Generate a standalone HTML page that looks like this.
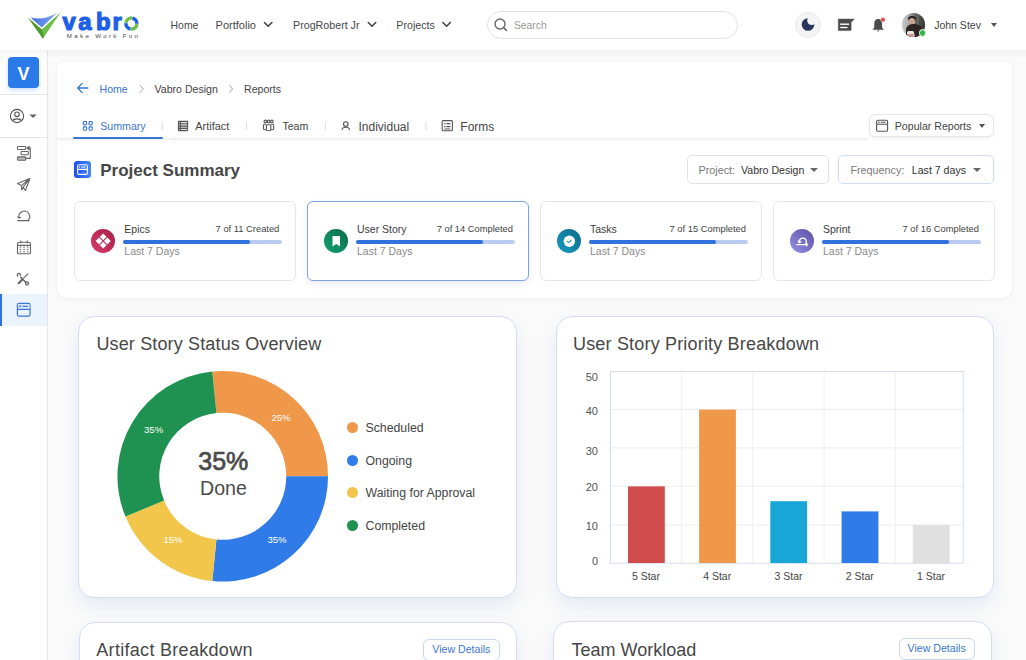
<!DOCTYPE html>
<html><head><meta charset="utf-8">
<style>
*{margin:0;padding:0;box-sizing:border-box}
html,body{width:1026px;height:660px;overflow:hidden;background:#fafafa;font-family:"Liberation Sans",sans-serif;color:#3f3f3f}
.a{position:absolute}
.t{position:absolute;white-space:nowrap;line-height:1}
#hdr{left:0;top:0;width:1026px;height:50px;background:#fff}
#side{left:0;top:50px;width:48px;height:610px;background:#fff;border-right:1px solid #e6e6e8}
#panel{left:57px;top:62.3px;width:955px;height:236.2px;background:#fff;border-radius:6px 6px 10px 10px;box-shadow:0 1px 4px rgba(0,0,0,.06)}
.card{position:absolute;top:201px;width:221.3px;height:80px;background:#fff;border:1px solid #e6e6e8;border-radius:6px}
.ccard{position:absolute;background:#fff;border:1px solid #d5ddf2;border-radius:16px;box-shadow:0 8px 18px rgba(110,130,225,.13)}
.ctitle{font-size:18px;color:#474747}
.dd{position:absolute;background:#fff;border:1px solid #e3e3e6;border-radius:5px}
.caret{position:absolute;width:0;height:0;border-left:4px solid transparent;border-right:4px solid transparent;border-top:5px solid #555}
.nav{font-size:11px;color:#474747;top:19.7px}
.ic{position:absolute;width:24px;height:24px;border-radius:50%;top:229px}
.cttl{font-size:10.5px;color:#3d3d3d;top:224.4px}
.cright{font-size:9.35px;color:#444;top:225.3px}
.csub{font-size:10.5px;color:#8a8a8a;top:246.4px}
.track{position:absolute;top:240px;height:4px;width:159px;border-radius:2px;background:#b9cbf0}
.fill{position:absolute;left:0;top:0;height:4px;width:127px;border-radius:2px;background:#2f72de}
.leg{position:absolute;left:347px;width:11px;height:11px;border-radius:50%}
.legt{font-size:12.3px;color:#444;left:365.5px}
.yl{font-size:11px;color:#555;right:428px;text-align:right}
.xl{font-size:10.5px;color:#444;top:571px}
.bar{position:absolute;width:37px}
.btn{position:absolute;background:#fff;border:1px solid #c9d6ee;border-radius:6px}
</style></head><body>
<!-- HEADER -->
<div id="hdr" class="a"></div>
<svg class="a" style="left:0;top:0" width="150" height="49" viewBox="0 0 150 49">
  <defs>
    <linearGradient id="lb" x1="0" y1="0" x2="1" y2="0"><stop offset="0" stop-color="#3b6fe0"/><stop offset="1" stop-color="#86acf2"/></linearGradient>
  </defs>
  <path d="M30.5 17.6 Q44 21 57.5 12.4 L41.8 27.6 Z" fill="url(#lb)"/>
  <path d="M28.2 18 L42.9 38.6 L60.7 12.2 L41.8 29.6 Z" fill="#6cbf45"/>
  <path d="M28.2 18 L42.9 38.6 L44 36.5 L41.8 29.6 Z" fill="#4e9a2e"/>
  <g transform="translate(131.4 23.6)" fill="none" stroke-width="3.5"><path d="M-5.43 -0.86 A5.5 5.5 0 0 1 0.38 -5.49" stroke="#6cbf45"/><path d="M0.86 -5.43 A5.5 5.5 0 0 1 5.50 0.10" stroke="#1d5fe6"/><path d="M5.47 0.57 A5.5 5.5 0 0 1 -0.38 5.49" stroke="#6cbf45"/><path d="M-0.86 5.43 A5.5 5.5 0 0 1 -5.49 -0.38" stroke="#1d5fe6"/></g>
</svg>
<div class="t" style="left:0;top:10.4px;font-size:23.8px;font-weight:700;color:#1d5fe6;-webkit-text-stroke:1.2px #1d5fe6"><span class="a" style="left:62.5px">v</span><span class="a" style="left:78.2px">a</span><span class="a" style="left:95.9px">b</span><span class="a" style="left:112.6px">r</span></div>
<div class="t" style="left:66.8px;top:33px;font-size:6.2px;color:#4a4a4a;letter-spacing:2.3px">Make Work Fun</div>

<div class="t nav" style="left:170.6px;top:20.9px;font-size:10.4px">Home</div>
<div class="t nav" style="left:215.6px">Portfolio</div>
<div class="t nav" style="left:293px;top:19.9px;font-size:10.7px">ProgRobert Jr</div>
<div class="t nav" style="left:396.3px;top:19.9px;font-size:10.7px">Projects</div>
<svg class="a" style="left:0;top:0" width="460" height="49">
  <g fill="none" stroke="#444" stroke-width="1.6" stroke-linecap="round" stroke-linejoin="round">
    <path d="M264.5 22.5 L268.2 26.2 L271.9 22.5"/>
    <path d="M368.3 22.5 L372 26.2 L375.7 22.5"/>
    <path d="M442.9 22.5 L446.6 26.2 L450.3 22.5"/>
  </g>
</svg>
<div class="a" style="left:487px;top:11px;width:251px;height:28px;border:1px solid #e3e3e3;border-radius:14px;background:#fff"></div>
<svg class="a" style="left:492px;top:16px" width="18" height="18">
  <circle cx="8" cy="8" r="5" fill="none" stroke="#666" stroke-width="1.4"/>
  <path d="M11.6 11.6 L14.5 14.5" stroke="#666" stroke-width="1.5" stroke-linecap="round"/>
</svg>
<div class="t" style="left:514px;top:21px;font-size:10.3px;color:#999">Search</div>

<div class="a" style="left:795.3px;top:12.3px;width:25.4px;height:25.4px;border-radius:50%;background:#f4f4f6;border:1px solid #e9e9ec"></div>
<svg class="a" style="left:795px;top:12px" width="26" height="26" viewBox="0 0 26 26">
  <defs><mask id="mm"><rect width="26" height="26" fill="#fff"/><circle cx="16.7" cy="8.5" r="4.5" fill="#000"/></mask></defs><circle cx="13" cy="12.5" r="6.3" fill="#28345e" mask="url(#mm)"/>
</svg>
<svg class="a" style="left:836px;top:17px" width="21" height="16" viewBox="0 0 21 16">
  <path d="M2.6 2.1 H18.3 L15.1 5.3 V13.1 Q15.1 13.6 14.6 13.6 H2.8 Q2.3 13.6 2.3 13.1 V2.6 Q2.3 2.1 2.8 2.1 Z" fill="#4a4a4a" stroke="#4a4a4a" stroke-width="0.5" stroke-linejoin="round"/>
  <rect x="4.2" y="6.5" width="9" height="1.4" fill="#fff"/>
  <rect x="4.2" y="9.8" width="7.3" height="1.4" fill="#fff"/>
</svg>
<svg class="a" style="left:870px;top:16px" width="18" height="18" viewBox="0 0 18 18">
  <path d="M8.1 3 C5 3 4.3 5.8 4.3 8 V11.5 L2.5 13.8 H13.9 L12.1 11.5 V8 C12.1 5.8 11.3 3 8.1 3 Z" fill="#4a4a4a"/>
  <path d="M6.8 14.5 A1.5 1.5 0 0 0 9.6 14.5 Z" fill="#4a4a4a"/>
  <circle cx="12.9" cy="3.7" r="2.3" fill="#e64848" stroke="#fff" stroke-width="0.4"/>
</svg>
<div class="a" style="left:901.8px;top:13.2px;width:23.5px;height:23.5px;border-radius:50%;overflow:hidden;background:linear-gradient(90deg,#c6cbc7 0%,#a9aea9 30%,#5b5f59 62%,#343632 100%)">
  <div class="a" style="left:15px;top:0;width:2px;height:24px;background:#6e726c;opacity:.6"></div>
  <div class="a" style="left:6.5px;top:2.5px;width:8px;height:5px;border-radius:50%;background:#1f1c1b"></div>
  <div class="a" style="left:7.5px;top:5px;width:6px;height:7px;border-radius:45%;background:#c7a391"></div>
  <div class="a" style="left:4px;top:11px;width:17px;height:14px;border-radius:40% 50% 0 0;background:#2d2523"></div>
  <div class="a" style="left:5px;top:17.5px;width:7px;height:4px;border-radius:1.5px;background:#e9e5df"></div>
  <div class="a" style="left:6px;top:20.5px;width:7px;height:3px;border-radius:1px;background:#c99a94"></div>
</div>
<div class="a" style="left:918.6px;top:28.9px;width:7.8px;height:7.8px;border-radius:50%;background:#33b849;border:1px solid #fff"></div>
<div class="t" style="left:934.2px;top:20.1px;font-size:10.5px;color:#444">John Stev</div>
<div class="caret" style="left:990.5px;top:23.2px;border-left-width:3.5px;border-right-width:3.5px;border-top-width:4px;border-top-color:#555"></div>

<!-- SIDEBAR -->
<div id="side" class="a"></div>
<div class="a" style="left:8px;top:57px;width:31px;height:30.5px;background:#2b7ae9;border-radius:4px;box-shadow:0 2px 4px rgba(43,122,233,.25)"></div>
<div class="t" style="left:8px;top:64.6px;width:31px;text-align:center;font-size:18px;font-weight:700;color:#fff">V</div>
<div class="a" style="left:0;top:94px;width:47px;height:1px;background:#e4e6ea"></div>
<svg class="a" style="left:8px;top:107px" width="32" height="18" viewBox="0 0 32 18">
  <circle cx="9" cy="9" r="6.6" fill="none" stroke="#555" stroke-width="1.1"/>
  <circle cx="9" cy="7.3" r="2.3" fill="none" stroke="#555" stroke-width="1.1"/>
  <path d="M4.6 13.8 C5.6 11.2 12.4 11.2 13.4 13.8" fill="none" stroke="#555" stroke-width="1.1"/>
  <path d="M21.3 7.6 H28.8 L25.05 11 Z" fill="#666"/>
</svg>
<div class="a" style="left:0;top:136.5px;width:47px;height:1px;background:#e4e6ea"></div>
<svg class="a" style="left:0;top:140px" width="47" height="190" viewBox="0 140 47 190">
  <g fill="none" stroke="#666" stroke-width="1.1">
    <rect x="17.5" y="146.5" width="8.2" height="3" rx="0.6"/>
    <rect x="21.1" y="151.5" width="7.2" height="3.2" rx="0.6"/>
    <rect x="17.5" y="156.9" width="8.2" height="3.3" rx="0.7" fill="#bbb"/>
    <path d="M25.7 158.4 H30.3 V148.1 H28.4"/>
    <path d="M27 148.1 L29 146.6 V149.6 Z" fill="#666"/>
    <path d="M17.4 183.6 L29.9 178.5 L25.4 190.5 L23.2 187.2 L21.7 190 L21.5 185.6 Z M21.5 185.6 L29.9 178.5 M23.2 187.2 L29.9 178.5" stroke-linejoin="round"/>
    <path d="M17.2 220.6 H29.6 M27.6 220.6 A5.3 5.3 0 1 0 19.1 217.6"/>
    <path d="M17.6 216.4 L19 218 L21 217.2"/>
    <rect x="17.5" y="242.2" width="13" height="11.5" rx="1.3"/>
    <path d="M17.5 245.4 H30.5 M20.8 240.6 V243.6 M27.2 240.6 V243.6"/>
    <path d="M20.2 276.8 L26.2 282.8" stroke-width="1.5"/><path d="M18 276.4 A1.6 1.6 0 1 1 20.4 275.7" stroke-width="1.3"/><circle cx="27" cy="283.5" r="1.5" stroke-width="1.3"/>
    <path d="M28.2 273.6 L23.4 278.4" stroke-width="1.2"/><path d="M22.6 279.2 L18.6 283.2" stroke-width="2.2" stroke-linecap="round"/>
  </g>
  <g fill="#777"><rect x="19.6" y="246.6" width="1.7" height="1.1"/><rect x="23.2" y="246.6" width="1.7" height="1.1"/><rect x="26.8" y="246.6" width="1.7" height="1.1"/><rect x="19.6" y="248.9" width="1.7" height="1.1"/><rect x="23.2" y="248.9" width="1.7" height="1.1"/><rect x="26.8" y="248.9" width="1.7" height="1.1"/><rect x="19.6" y="251.2" width="1.7" height="1.1"/><rect x="23.2" y="251.2" width="1.7" height="1.1"/><rect x="26.8" y="251.2" width="1.7" height="1.1"/></g>
</svg>
<div class="a" style="left:0;top:294px;width:47px;height:32px;background:#ebf3fd"></div>
<div class="a" style="left:0;top:294px;width:2px;height:32px;background:#2f72de"></div>
<svg class="a" style="left:0;top:294px" width="47" height="32" viewBox="0 294 47 32">
  <g fill="none" stroke="#3a78d8" stroke-width="1.2">
    <rect x="17.4" y="303.4" width="12.6" height="12.8" rx="1.6"/><rect x="18" y="304" width="11.4" height="5.4" fill="#dce8fb" stroke="none"/>
    <path d="M17.4 309.4 H30"/>
    <path d="M22.6 306.3 H28"/>
  </g>
  <circle cx="20.2" cy="306.3" r="1" fill="#3a78d8"/>
</svg>

<div class="a" style="left:0;top:50px;width:1026px;height:8px;background:linear-gradient(rgba(0,0,0,.04),rgba(0,0,0,0))"></div>
<!-- PANEL -->
<div id="panel" class="a"></div>
<svg class="a" style="left:74px;top:81px" width="18" height="14" viewBox="0 0 18 14">
  <path d="M3.9 7 H13.9 M8.2 2.4 L3.6 7 L8.2 11.6" fill="none" stroke="#3a78d0" stroke-width="1.3" stroke-linecap="round" stroke-linejoin="round"/>
</svg>
<div class="t" style="left:99.5px;top:83.6px;font-size:10.6px;color:#3a78d0">Home</div>
<svg class="a" style="left:136px;top:82px" width="120" height="14">
  <path d="M3.8 3 L7.2 6.8 L3.8 10.6 M93.2 3 L96.6 6.8 L93.2 10.6" fill="none" stroke="#bdbdbd" stroke-width="1.1"/>
</svg>
<div class="t" style="left:154.5px;top:83.6px;font-size:10.6px;color:#444">Vabro Design</div>
<div class="t" style="left:244px;top:83.6px;font-size:10.6px;color:#444">Reports</div>

<!-- tabs -->
<div class="a" style="left:57px;top:137.5px;width:811px;height:4px;background:linear-gradient(#ececee,rgba(255,255,255,0))"></div>
<div class="a" style="left:73px;top:136.5px;width:90px;height:2.5px;background:#3a78d0;border-radius:1px"></div>
<svg class="a" style="left:80px;top:118px" width="420" height="16" viewBox="80 118 420 16">
  <g fill="none" stroke="#3a78d0" stroke-width="1.1">
    <rect x="83.3" y="121.6" width="3.3" height="3.3" rx="0.9"/><rect x="89" y="121.6" width="3.3" height="3.3" rx="0.9"/>
    <rect x="83.3" y="126.9" width="3.3" height="3.3" rx="0.9"/><rect x="89" y="126.9" width="3.3" height="3.3" rx="0.9"/>
  </g>
  <g fill="none" stroke="#555" stroke-width="1.1">
    <rect x="178.4" y="121.4" width="9.2" height="9.2" rx="0.5" fill="#ddd"/>
    <path d="M178.4 123.8 H187.6 M178.4 126.1 H187.6 M178.4 128.4 H187.6 M180.4 121.4 V130.6"/>
    <circle cx="265.3" cy="121.4" r="1.3"/><circle cx="268.6" cy="121.4" r="1.3"/><circle cx="271.9" cy="121.4" r="1.3"/>
    <path d="M266.2 129.8 H264.6 Q263.5 129.8 263.5 128.6 V125.4 Q263.5 124.3 264.6 124.3 H266 M271.2 124.3 H272.6 Q273.7 124.3 273.7 125.4 V128.6 Q273.7 129.8 272.6 129.8 H271 M266.4 125.6 Q266.4 124.8 267.4 124.8 H269.8 Q270.8 124.8 270.8 125.6 V129.4 Q270.8 130.8 268.6 130.8 Q266.4 130.8 266.4 129.4 Z"/>
    <circle cx="345.8" cy="124" r="2.3"/>
    <path d="M341.9 130.2 Q342.3 127.3 345.8 127.3 Q349.3 127.3 349.7 130.2"/>
    <rect x="442.2" y="120.6" width="10.2" height="10.2" rx="1"/>
    <path d="M446.5 123.6 H450.4 M446.5 126.6 H450.4 M444.4 129 H450.4"/>
  </g>
  <g fill="#555"><rect x="444.2" y="123" width="1.3" height="1.3"/><rect x="444.2" y="126" width="1.3" height="1.3"/></g>
  <path d="M162.2 121.5 V130 M246.5 121.5 V130 M325.3 121.5 V130 M426 121.5 V130" stroke="#dcdcdc" stroke-width="1"/>
</svg>
<div class="t" style="left:100.3px;top:121.1px;font-size:10.6px;color:#3a78d0">Summary</div>
<div class="t" style="left:195.3px;top:121px;font-size:10.9px;color:#444">Artifact</div>
<div class="t" style="left:282.4px;top:121.2px;font-size:10.6px;color:#444">Team</div>
<div class="t" style="left:358.5px;top:120.6px;font-size:12px;color:#444">Individual</div>
<div class="t" style="left:460.3px;top:120.6px;font-size:12px;color:#444">Forms</div>

<div class="dd" style="left:868.7px;top:114.2px;width:125.3px;height:23.3px;border-radius:6px;border-color:#e6e6e8;box-shadow:0 2px 4px rgba(0,0,0,.05)"></div>
<svg class="a" style="left:875px;top:119px" width="14" height="14" viewBox="875 119 14 14">
  <g fill="none" stroke="#555" stroke-width="1.1"><rect x="876.6" y="120.3" width="11" height="11" rx="1.2"/><path d="M876.6 124.2 H887.6 M880.6 122.3 H885.5"/></g>
  <rect x="878.2" y="121.7" width="1.4" height="1.2" fill="#555"/>
</svg>
<div class="t" style="left:894.8px;top:121.3px;font-size:10.6px;color:#444">Popular Reports</div>
<div class="caret" style="left:978.5px;top:123.7px;border-left-width:3.7px;border-right-width:3.7px;border-top-width:4.4px"></div>

<!-- project summary -->
<div class="a" style="left:74px;top:161px;width:17px;height:17px;border-radius:3px;background:linear-gradient(90deg,#1c4ff0,#4a88f4)"></div>
<svg class="a" style="left:74px;top:161px" width="17" height="17" viewBox="0 0 17 17">
  <g fill="none" stroke="#fff" stroke-width="1.1"><rect x="3.6" y="3.8" width="9.8" height="9.6" rx="1.5"/><path d="M3.6 8.4 H13.4 M7.2 6 H11.6"/></g><circle cx="5.6" cy="6" r="0.8" fill="#fff"/>
</svg>
<div class="t" style="left:100.2px;top:162.3px;font-size:17px;font-weight:700;color:#464646">Project Summary</div>

<div class="dd" style="left:687.3px;top:155.2px;width:141.7px;height:28.4px"></div>
<div class="t" style="left:698.5px;top:164.6px;font-size:10.8px;color:#7a7a7a">Project:</div>
<div class="t" style="left:741px;top:164.6px;font-size:10.6px;color:#333">Vabro Design</div>
<div class="caret" style="left:809.8px;top:167.6px;border-left-width:4px;border-right-width:4px;border-top-width:4px;border-top-color:#666"></div>
<div class="dd" style="left:838.3px;top:155.2px;width:156.1px;height:28.4px;border-color:#cfdcf2"></div>
<div class="t" style="left:850.4px;top:164.6px;font-size:10.8px;color:#7a7a7a">Frequency:</div>
<div class="t" style="left:911.8px;top:164.6px;font-size:10.6px;color:#333">Last 7 days</div>
<div class="caret" style="left:973.2px;top:167.6px;border-left-width:4px;border-right-width:4px;border-top-width:4px;border-top-color:#666"></div>

<!-- cards -->
<div class="card" style="left:74.1px;width:221.6px"></div>
<div class="card" style="left:307.2px;width:221.7px;border-color:#7ea3e2;box-shadow:0 3px 6px rgba(80,110,190,.12)"></div>
<div class="card" style="left:539.9px;width:221.9px"></div>
<div class="card" style="left:772.9px;width:221.9px"></div>

<div class="ic" style="left:91.2px;top:229.1px;width:23.8px;height:23.8px;background:linear-gradient(45deg,#dc3c6a,#a31f48)"></div>
<svg class="a" style="left:91.2px;top:229.1px" width="24" height="24" viewBox="0 0 24 24">
  <path d="M12.2 4.4 L19.8 12 L12.2 19.6 L4.6 12 Z" fill="#fff"/>
  <path d="M8.4 8.2 L16 15.8 M16 8.2 L8.4 15.8" stroke="#b42a52" stroke-width="1.1"/>
</svg>
<div class="ic" style="left:324px;top:229.1px;width:23.8px;height:23.8px;background:linear-gradient(45deg,#14a370,#0b6a48)"></div>
<svg class="a" style="left:324px;top:229.1px" width="24" height="24" viewBox="0 0 24 24">
  <path d="M8.5 7 H16 V17.6 L12.25 15 L8.5 17.6 Z" fill="#fff"/>
</svg>
<div class="ic" style="left:557px;top:229.1px;width:23.8px;height:23.8px;background:linear-gradient(45deg,#169cc0,#0d6a8a)"></div>
<svg class="a" style="left:557px;top:229.1px" width="24" height="24" viewBox="0 0 24 24">
  <circle cx="12.3" cy="12.2" r="5.7" fill="#fff"/>
  <path d="M10.2 12.4 L11.7 13.6 L14.3 11.2" fill="none" stroke="#2a8db0" stroke-width="1.1" stroke-linecap="round" stroke-linejoin="round"/>
</svg>
<div class="ic" style="left:790px;top:229.1px;width:23.8px;height:23.8px;background:linear-gradient(45deg,#9690e2,#5a4fa6)"></div>
<svg class="a" style="left:790px;top:229.1px" width="24" height="24" viewBox="0 0 24 24">
  <g fill="none" stroke="#fff" stroke-width="1.3" stroke-linecap="round" stroke-linejoin="round">
    <path d="M6.8 15.6 H17.6 M16.2 14.4 L17.6 15.6 L16.2 16.8"/>
    <path d="M9.3 13.4 A3.6 3.6 0 1 1 15.4 15.2"/>
    <path d="M8.2 12 L9.3 13.6 L10.8 12.6"/>
  </g>
</svg>

<div class="t cttl" style="left:124.3px">Epics</div>
<div class="t cright" style="right:746.7px">7 of 11 Created</div>
<div class="track" style="left:123px"><div class="fill"></div></div>
<div class="t csub" style="left:124.3px">Last 7 Days</div>

<div class="t cttl" style="left:357px">User Story</div>
<div class="t cright" style="right:513px">7 of 14 Completed</div>
<div class="track" style="left:355.8px"><div class="fill"></div></div>
<div class="t csub" style="left:357px">Last 7 Days</div>

<div class="t cttl" style="left:590px">Tasks</div>
<div class="t cright" style="right:280.1px">7 of 15 Completed</div>
<div class="track" style="left:589px"><div class="fill"></div></div>
<div class="t csub" style="left:590px">Last 7 Days</div>

<div class="t cttl" style="left:823px">Sprint</div>
<div class="t cright" style="right:47.1px">7 of 16 Completed</div>
<div class="track" style="left:822px"><div class="fill"></div></div>
<div class="t csub" style="left:823px">Last 7 Days</div>

<!-- CHART CARDS -->
<div class="ccard" style="left:78.4px;top:316px;width:438.3px;height:282.4px"></div>
<div class="t ctitle" style="left:96.4px;top:335.2px;letter-spacing:0.15px">User Story Status Overview</div>
<svg class="a" style="left:0;top:0" width="520" height="600" viewBox="0 0 520 600" id="donut"><path d="M212.29 371.47 A105.3 105.3 0 0 1 328.05 476.25 L286.25 476.25 A63.5 63.5 0 0 0 216.44 413.06 Z" fill="#f0984a"/><path d="M328.05 476.25 A105.3 105.3 0 0 1 212.29 581.03 L216.44 539.44 A63.5 63.5 0 0 0 286.25 476.25 Z" fill="#2f7be8"/><path d="M212.29 581.03 A105.3 105.3 0 0 1 125.47 516.55 L164.08 500.55 A63.5 63.5 0 0 0 216.44 539.44 Z" fill="#f2c64b"/><path d="M125.47 516.55 A105.3 105.3 0 0 1 212.29 371.47 L216.44 413.06 A63.5 63.5 0 0 0 164.08 500.55 Z" fill="#1f9150"/><text x="281" y="421.2" text-anchor="middle" font-family="Liberation Sans" font-size="9.6" fill="#fff">25%</text><text x="277" y="542.8" text-anchor="middle" font-family="Liberation Sans" font-size="9.6" fill="#fff">35%</text><text x="173" y="542.8" text-anchor="middle" font-family="Liberation Sans" font-size="9.6" fill="#fff">15%</text><text x="153.6" y="433.09999999999997" text-anchor="middle" font-family="Liberation Sans" font-size="9.6" fill="#fff">35%</text></svg>
<div class="t" style="left:223.7px;top:449.2px;width:0;font-size:25px;font-weight:400;color:#4a4a4a;-webkit-text-stroke:0.7px #4a4a4a"><span class="a" style="left:-25.4px">35%</span></div>
<div class="t" style="left:200px;top:478.7px;font-size:19.6px;color:#4a4a4a">Done</div>
<div class="leg" style="left:347px;top:421.5px;background:#f0984a"></div>
<div class="leg" style="left:347px;top:454.5px;background:#2f7be8"></div>
<div class="leg" style="left:347px;top:487px;background:#f2c64b"></div>
<div class="leg" style="left:347px;top:520px;background:#1f9150"></div>
<div class="t legt" style="top:421.5px">Scheduled</div>
<div class="t legt" style="top:454.5px">Ongoing</div>
<div class="t legt" style="top:487px">Waiting for Approval</div>
<div class="t legt" style="top:520px">Completed</div>

<div class="ccard" style="left:556px;top:316px;width:438.2px;height:282.4px"></div>
<div class="t ctitle" style="left:573px;top:335.2px;letter-spacing:0.18px">User Story Priority Breakdown</div>
<svg class="a" style="left:600px;top:360px" width="380" height="220" viewBox="600 360 380 220">
  <g stroke="#ececf0" stroke-width="1">
    <path d="M610.5 409.6 H963 M610.5 447.9 H963 M610.5 486.2 H963 M610.5 525 H963"/>
    <path d="M681.5 371.5 V563 M752.8 371.5 V563 M824.1 371.5 V563 M895.3 371.5 V563" stroke="#f0f0f3"/>
  </g>
  <rect x="610.5" y="371.5" width="352.8" height="191.8" fill="none" stroke="#d5def0" stroke-width="1"/>
  <rect x="628" y="486.4" width="36.8" height="76.6" fill="#d04b4b"/>
  <rect x="699.1" y="409.6" width="36.8" height="153.4" fill="#f0984a"/>
  <rect x="770.3" y="501.2" width="36.8" height="61.8" fill="#17a6d6"/>
  <rect x="841.6" y="511.4" width="36.8" height="51.6" fill="#2f7be8"/>
  <rect x="912.8" y="525" width="36.8" height="38" fill="#e0e0e0"/>
</svg>
<div class="t yl" style="top:371.7px">50</div>
<div class="t yl" style="top:405.6px">40</div>
<div class="t yl" style="top:445.7px">30</div>
<div class="t yl" style="top:482.3px">20</div>
<div class="t yl" style="top:521.4px">10</div>
<div class="t yl" style="top:555.6px">0</div>
<div class="t xl" style="left:631.9px">5 Star</div>
<div class="t xl" style="left:703.2px">4 Star</div>
<div class="t xl" style="left:774.5px">3 Star</div>
<div class="t xl" style="left:845.8px">2 Star</div>
<div class="t xl" style="left:917px">1 Star</div>

<!-- BOTTOM CARDS -->
<div class="ccard" style="left:78.5px;top:622.2px;width:438.6px;height:80px"></div>
<div class="t ctitle" style="left:96.3px;top:640.5px;letter-spacing:0.3px">Artifact Breakdown</div>
<div class="btn" style="left:423.4px;top:639.3px;width:76.8px;height:22px"></div>
<div class="t" style="left:432.3px;top:644.3px;font-size:10.6px;color:#3a78d0">View Details</div>
<div class="ccard" style="left:553.4px;top:621px;width:438.6px;height:80px"></div>
<div class="t ctitle" style="left:571.5px;top:641.2px">Team Workload</div>
<div class="btn" style="left:898.7px;top:638.4px;width:76.6px;height:22px"></div>
<div class="t" style="left:907.6px;top:643.4px;font-size:10.6px;color:#3a78d0">View Details</div>
</body></html>
